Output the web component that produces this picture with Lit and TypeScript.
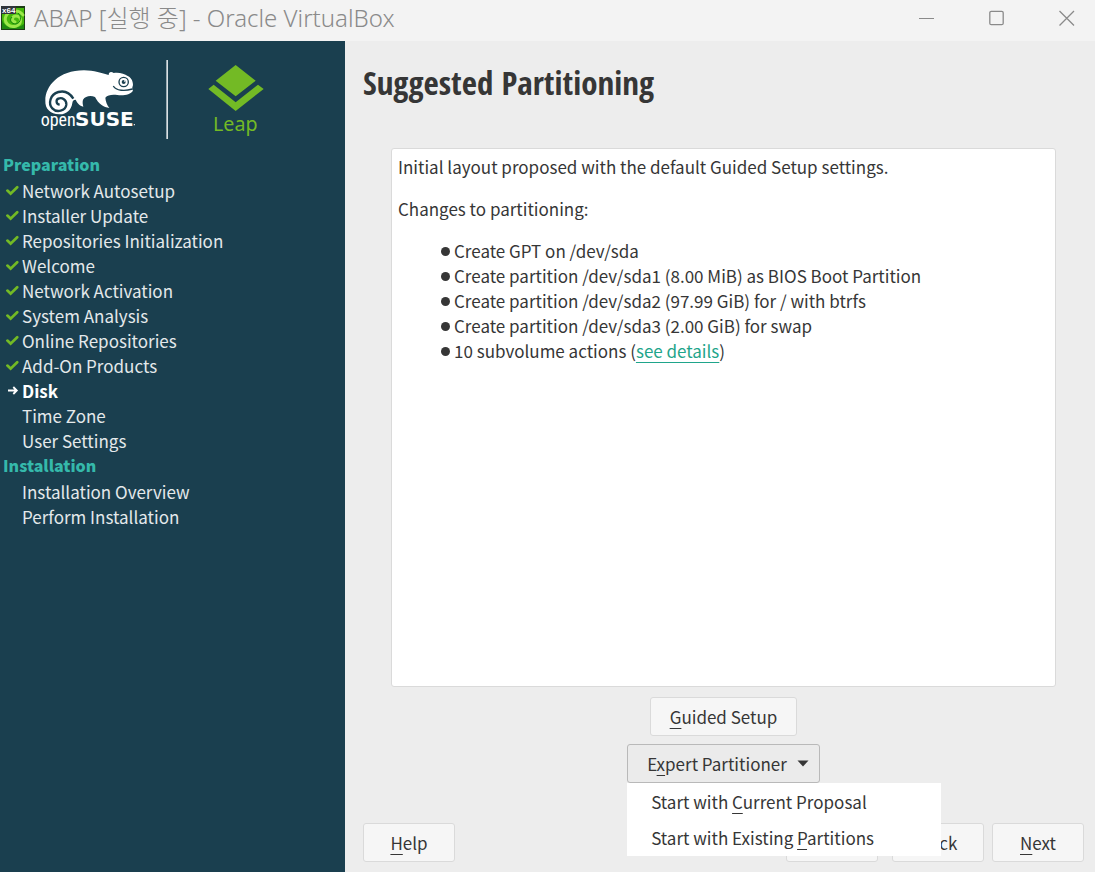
import { LitElement, html, svg, css, nothing } from "lit";
import { customElement, property, state } from "lit/decorators.js";

type StepState = "done" | "current" | "todo";
interface Step { label: string; state: StepState; }
interface Stage { title: string; steps: Step[]; }

const STAGES: Stage[] = [
  {
    title: "Preparation",
    steps: [
      { label: "Network Autosetup", state: "done" },
      { label: "Installer Update", state: "done" },
      { label: "Repositories Initialization", state: "done" },
      { label: "Welcome", state: "done" },
      { label: "Network Activation", state: "done" },
      { label: "System Analysis", state: "done" },
      { label: "Online Repositories", state: "done" },
      { label: "Add-On Products", state: "done" },
      { label: "Disk", state: "current" },
      { label: "Time Zone", state: "todo" },
      { label: "User Settings", state: "todo" },
    ],
  },
  {
    title: "Installation",
    steps: [
      { label: "Installation Overview", state: "todo" },
      { label: "Perform Installation", state: "todo" },
    ],
  },
];

const ACTIONS = [
  "Create GPT on /dev/sda",
  "Create partition /dev/sda1 (8.00 MiB) as BIOS Boot Partition",
  "Create partition /dev/sda2 (97.99 GiB) for / with btrfs",
  "Create partition /dev/sda3 (2.00 GiB) for swap",
];

/** Renders a label with its keyboard mnemonic ("&" before the letter) underlined. */
const mnemonic = (text: string) => {
  const i = text.indexOf("&");
  return html`<span>${text.slice(0, i)}<span class="key">${text[i + 1]}</span>${text.slice(i + 2)}</span>`;
};

const mnemonicStyles = css`
  .key {
    text-decoration: underline;
    text-decoration-thickness: 1px;
    text-underline-offset: 4px;
    text-decoration-skip-ink: none;
  }
`;

@customElement("window-titlebar")
class WindowTitlebar extends LitElement {
  static styles = css`
    :host {
      display: flex;
      align-items: center;
      height: 41px;
      box-sizing: border-box;
      padding: 0 20px 5px 1px;
      background: #f3f3f3;
      color: #8a8a8a;
      font: 300 24px/36px "Noto Sans", "Noto Sans CJK KR", sans-serif;
    }
    .icon { flex: none; }
    .title { flex: 1; margin-left: 9px; font: inherit; white-space: nowrap; }
    .controls { display: flex; gap: 54px; }
    .control {
      display: grid;
      place-items: center;
      width: 16px;
      height: 36px;
      padding: 0;
      border: 0;
      background: none;
      color: #8a8a8a;
    }
  `;

  render() {
    return html`
      <svg class="icon" width="24" height="24" viewBox="0 0 24 24" aria-hidden="true">
        <rect width="24" height="24" fill="#1d3d16" />
        <rect x="1" y="2" width="22" height="21" fill="#45b80c" />
        <path d="M1 14C4 22 14 25 23 18V23H1Z" fill="#1f8a10" />
        <path d="M22 9C18 3 8 4 5 10C2 17 9 22 15 20C21 18 21 10 15 10C11 10 10 15 14 16" fill="none" stroke="#9be84a" stroke-width="3" stroke-linecap="round" />
        <path d="M17 7C21 10 20 17 15 18C10 18 8 14 11 11" fill="none" stroke="#168411" stroke-width="1" />
        <rect y="0" width="15" height="8" rx="1" fill="#30343a" />
        <text x="1" y="7" font-family="Liberation Sans" font-weight="700" font-size="8" fill="#fff">x64</text>
      </svg>
      <span class="title">ABAP [실행 중] - Oracle VirtualBox</span>
      <div class="controls">
        <button class="control" aria-label="Minimize">
          <svg width="16" height="16" viewBox="0 0 16 16"><path d="M0 8.5H15" stroke="currentColor" /></svg>
        </button>
        <button class="control" aria-label="Maximize">
          <svg width="16" height="16" viewBox="0 0 16 16"><rect x=".8" y="1.3" width="13.4" height="13.4" rx="1.5" fill="none" stroke="currentColor" stroke-width="1.3" /></svg>
        </button>
        <button class="control" aria-label="Close">
          <svg width="16" height="16" viewBox="0 0 16 16"><path d="M.5 1L15 15.5M15 1L.5 15.5" stroke="currentColor" stroke-width="1.3" /></svg>
        </button>
      </div>
    `;
  }
}

@customElement("installer-sidebar")
class InstallerSidebar extends LitElement {
  @property({ attribute: false }) stages: Stage[] = [];

  static styles = css`
    :host {
      display: block;
      box-sizing: border-box;
      padding: 9px 3px;
      background: #1a3f4f;
      color: #e4e9eb;
      font: 17px/25px "Noto Sans CJK KR", sans-serif;
    }
    .logo { display: block; margin: 0 0 10px 27px; }
    .stage { margin: 0 0 1px; font-size: 16px; line-height: 25px; font-weight: 900; color: #35b9ab; }
    .steps { margin: 0; padding: 0; list-style: none; }
    .step { display: grid; grid-template-columns: 19px 1fr; align-items: center; white-space: nowrap; }
    .mark { display: block; margin-left: 3px; }
    .current { font-weight: 700; color: #fff; }
  `;

  private mark(s: StepState) {
    if (s === "done")
      return svg`<path d="M1.4 6.6L4.6 9.6L11.2 3.2" fill="none" stroke="#73ba25" stroke-width="2.7" stroke-linecap="round" />`;
    if (s === "current")
      return svg`<path d="M2 6.5H10.5M7.3 3L10.8 6.5L7.3 10" fill="none" stroke="#fff" stroke-width="1.8" />`;
    return nothing;
  }

  render() {
    return html`
      <svg class="logo" width="240" height="92" viewBox="0 0 720 276" role="img" aria-label="openSUSE Leap">
        <path fill="#fff" d="M46 152C46 108 86 61 162 61C192 61 216 70 236 75C236 65 244 63 251 69C266 66 284 71 293 78C302 82 309 92 309 105C307 112 305 117 309 122C302 134 280 138 262 135C245 133 233 135 226 143C227 155 231 164 238 174C221 172 205 161 195 141C182 135 166 138 159 149C157 156 158 162 160 170C148 168 141 157 137 149C131 149 128 152 127 159C124 181 108 194 88 193C60 191 45 176 46 152Z" />
        <path fill="none" stroke="#1a3f4f" stroke-width="7" d="M130 146C118 126 100 122 85 126C60 133 54 161 67 175C80 189 107 183 109 164C110 149 96 141 85 146C77 150 78 163 89 164" />
        <circle cx="281" cy="96" r="14" fill="#fff" stroke="#1a3f4f" stroke-width="4" />
        <circle cx="281" cy="96" r="6" fill="#1a3f4f" />
        <circle cx="284" cy="93" r="2.5" fill="#fff" />
        <path fill="none" stroke="#1a3f4f" stroke-width="4" d="M250 108C258 123 285 124 307 117" />
        <text x="32" y="227" font-family="Roboto Condensed, Roboto, sans-serif" font-size="54" fill="#fff">open</text>
        <text x="135" y="227" font-family="DejaVu Sans, sans-serif" font-weight="700" font-size="60" fill="#fff">SUSE</text>
        <circle cx="313" cy="224" r="2" fill="#fff" />
        <rect x="409" y="30" width="5" height="237" fill="#d9e0e3" />
        <path fill="#73ba25" d="M617 45L677 92L617 139L557 92ZM535 117L551 104L617 157L684 104L701 117L617 183Z" />
        <text x="616" y="243" text-anchor="middle" font-family="Noto Sans, sans-serif" font-size="59" fill="#73ba25">Leap</text>
      </svg>
      ${this.stages.map(
        (stage) => html`
          <h2 class="stage">${stage.title}</h2>
          <ul class="steps">
            ${stage.steps.map(
              (step) => html`
                <li class="step ${step.state}">
                  <svg class="mark" width="13" height="13" viewBox="0 0 13 13" aria-hidden="true">${this.mark(step.state)}</svg>
                  <span>${step.label}</span>
                </li>
              `
            )}
          </ul>
        `
      )}
    `;
  }
}

@customElement("partition-page")
class PartitionPage extends LitElement {
  @state() private menuOpen = true;

  static styles = [
    mnemonicStyles,
    css`
      :host {
        display: flex;
        flex-direction: column;
        box-sizing: border-box;
        padding: 19px 11px 10px 18px;
        background: #ededed;
        color: #363636;
        font: 17px/25px "Noto Sans CJK KR", sans-serif;
      }
      .title {
        margin: 0;
        font: 700 33px/46px "Open Sans Condensed", "Noto Sans Condensed", "Roboto Condensed", "Noto Sans CJK KR", sans-serif;
      }
      .content {
        flex: 1;
        display: flex;
        flex-direction: column;
        align-items: center;
        gap: 8px;
        margin: 42px 28px 40px;
      }
      .summary {
        flex: 1;
        align-self: stretch;
        box-sizing: border-box;
        margin-bottom: 2px;
        padding: 5px 6px;
        border: 1px solid #dadada;
        border-radius: 3px;
        background: #fff;
      }
      .text { margin: 0 0 17px; }
      .actions { margin: 0; padding: 0 0 0 43px; list-style: none; }
      .action { display: flex; align-items: center; }
      .action::before {
        content: "";
        width: 9px;
        height: 9px;
        margin: 1px 4px 0 0;
        border-radius: 50%;
        background: #363636;
      }
      .link {
        color: #1fa58b;
        text-decoration: underline;
        text-decoration-thickness: 1px;
        text-underline-offset: 4px;
        text-decoration-skip-ink: none;
      }
      .button {
        box-sizing: border-box;
        min-width: 92px;
        height: 39px;
        padding: 0 19px;
        border: 1px solid #dadada;
        border-radius: 3px;
        background: #f6f6f6;
        color: inherit;
        font: inherit;
      }
      .dropdown { position: relative; }
      .toggle {
        display: flex;
        align-items: center;
        gap: 10px;
        padding: 0 10px 0 19px;
        border-color: #b9b9b9;
        background: #ebebeb;
      }
      .menu {
        position: absolute;
        z-index: 1;
        top: 100%;
        left: 0;
        display: flex;
        flex-direction: column;
        width: 314px;
        padding-bottom: 1px;
        background: #fff;
      }
      .item {
        height: 36px;
        padding: 0 24px;
        border: 0;
        background: none;
        color: inherit;
        font: inherit;
        text-align: left;
      }
      .footer { display: flex; gap: 8px; }
      .abort { margin: 0 6px 0 auto; }
    `,
  ];

  render() {
    return html`
      <h1 class="title">Suggested Partitioning</h1>
      <div class="content">
        <section class="summary">
          <p class="text">Initial layout proposed with the default Guided Setup settings.</p>
          <p class="text">Changes to partitioning:</p>
          <ul class="actions">
            ${ACTIONS.map((a) => html`<li class="action"><span>${a}</span></li>`)}
            <li class="action"><span>10 subvolume actions (<a class="link" href="#details">see details</a>)</span></li>
          </ul>
        </section>
        <button class="button">${mnemonic("&Guided Setup")}</button>
        <div class="dropdown">
          <button
            class="button toggle"
            aria-haspopup="menu"
            aria-expanded=${this.menuOpen}
            @click=${() => (this.menuOpen = !this.menuOpen)}
          >
            ${mnemonic("E&xpert Partitioner")}
            <svg width="12" height="7" viewBox="0 0 12 7" aria-hidden="true"><path d="M.5.5H11.5L6 6.5Z" fill="#363636" /></svg>
          </button>
          ${this.menuOpen
            ? html`<div class="menu" role="menu">
                <button class="item" role="menuitem">${mnemonic("Start with &Current Proposal")}</button>
                <button class="item" role="menuitem">${mnemonic("Start with Existing &Partitions")}</button>
              </div>`
            : nothing}
        </div>
      </div>
      <div class="footer">
        <button class="button">${mnemonic("&Help")}</button>
        <button class="button abort">${mnemonic("Abo&rt")}</button>
        <button class="button">${mnemonic("&Back")}</button>
        <button class="button">${mnemonic("&Next")}</button>
      </div>
    `;
  }
}

@customElement("app-root")
class AppRoot extends LitElement {
  static styles = css`
    :host { display: flex; flex-direction: column; min-height: 100vh; }
    .body { flex: 1; display: grid; grid-template-columns: 345px 1fr; }
  `;

  render() {
    return html`
      <window-titlebar></window-titlebar>
      <div class="body">
        <installer-sidebar .stages=${STAGES}></installer-sidebar>
        <partition-page></partition-page>
      </div>
    `;
  }
}
